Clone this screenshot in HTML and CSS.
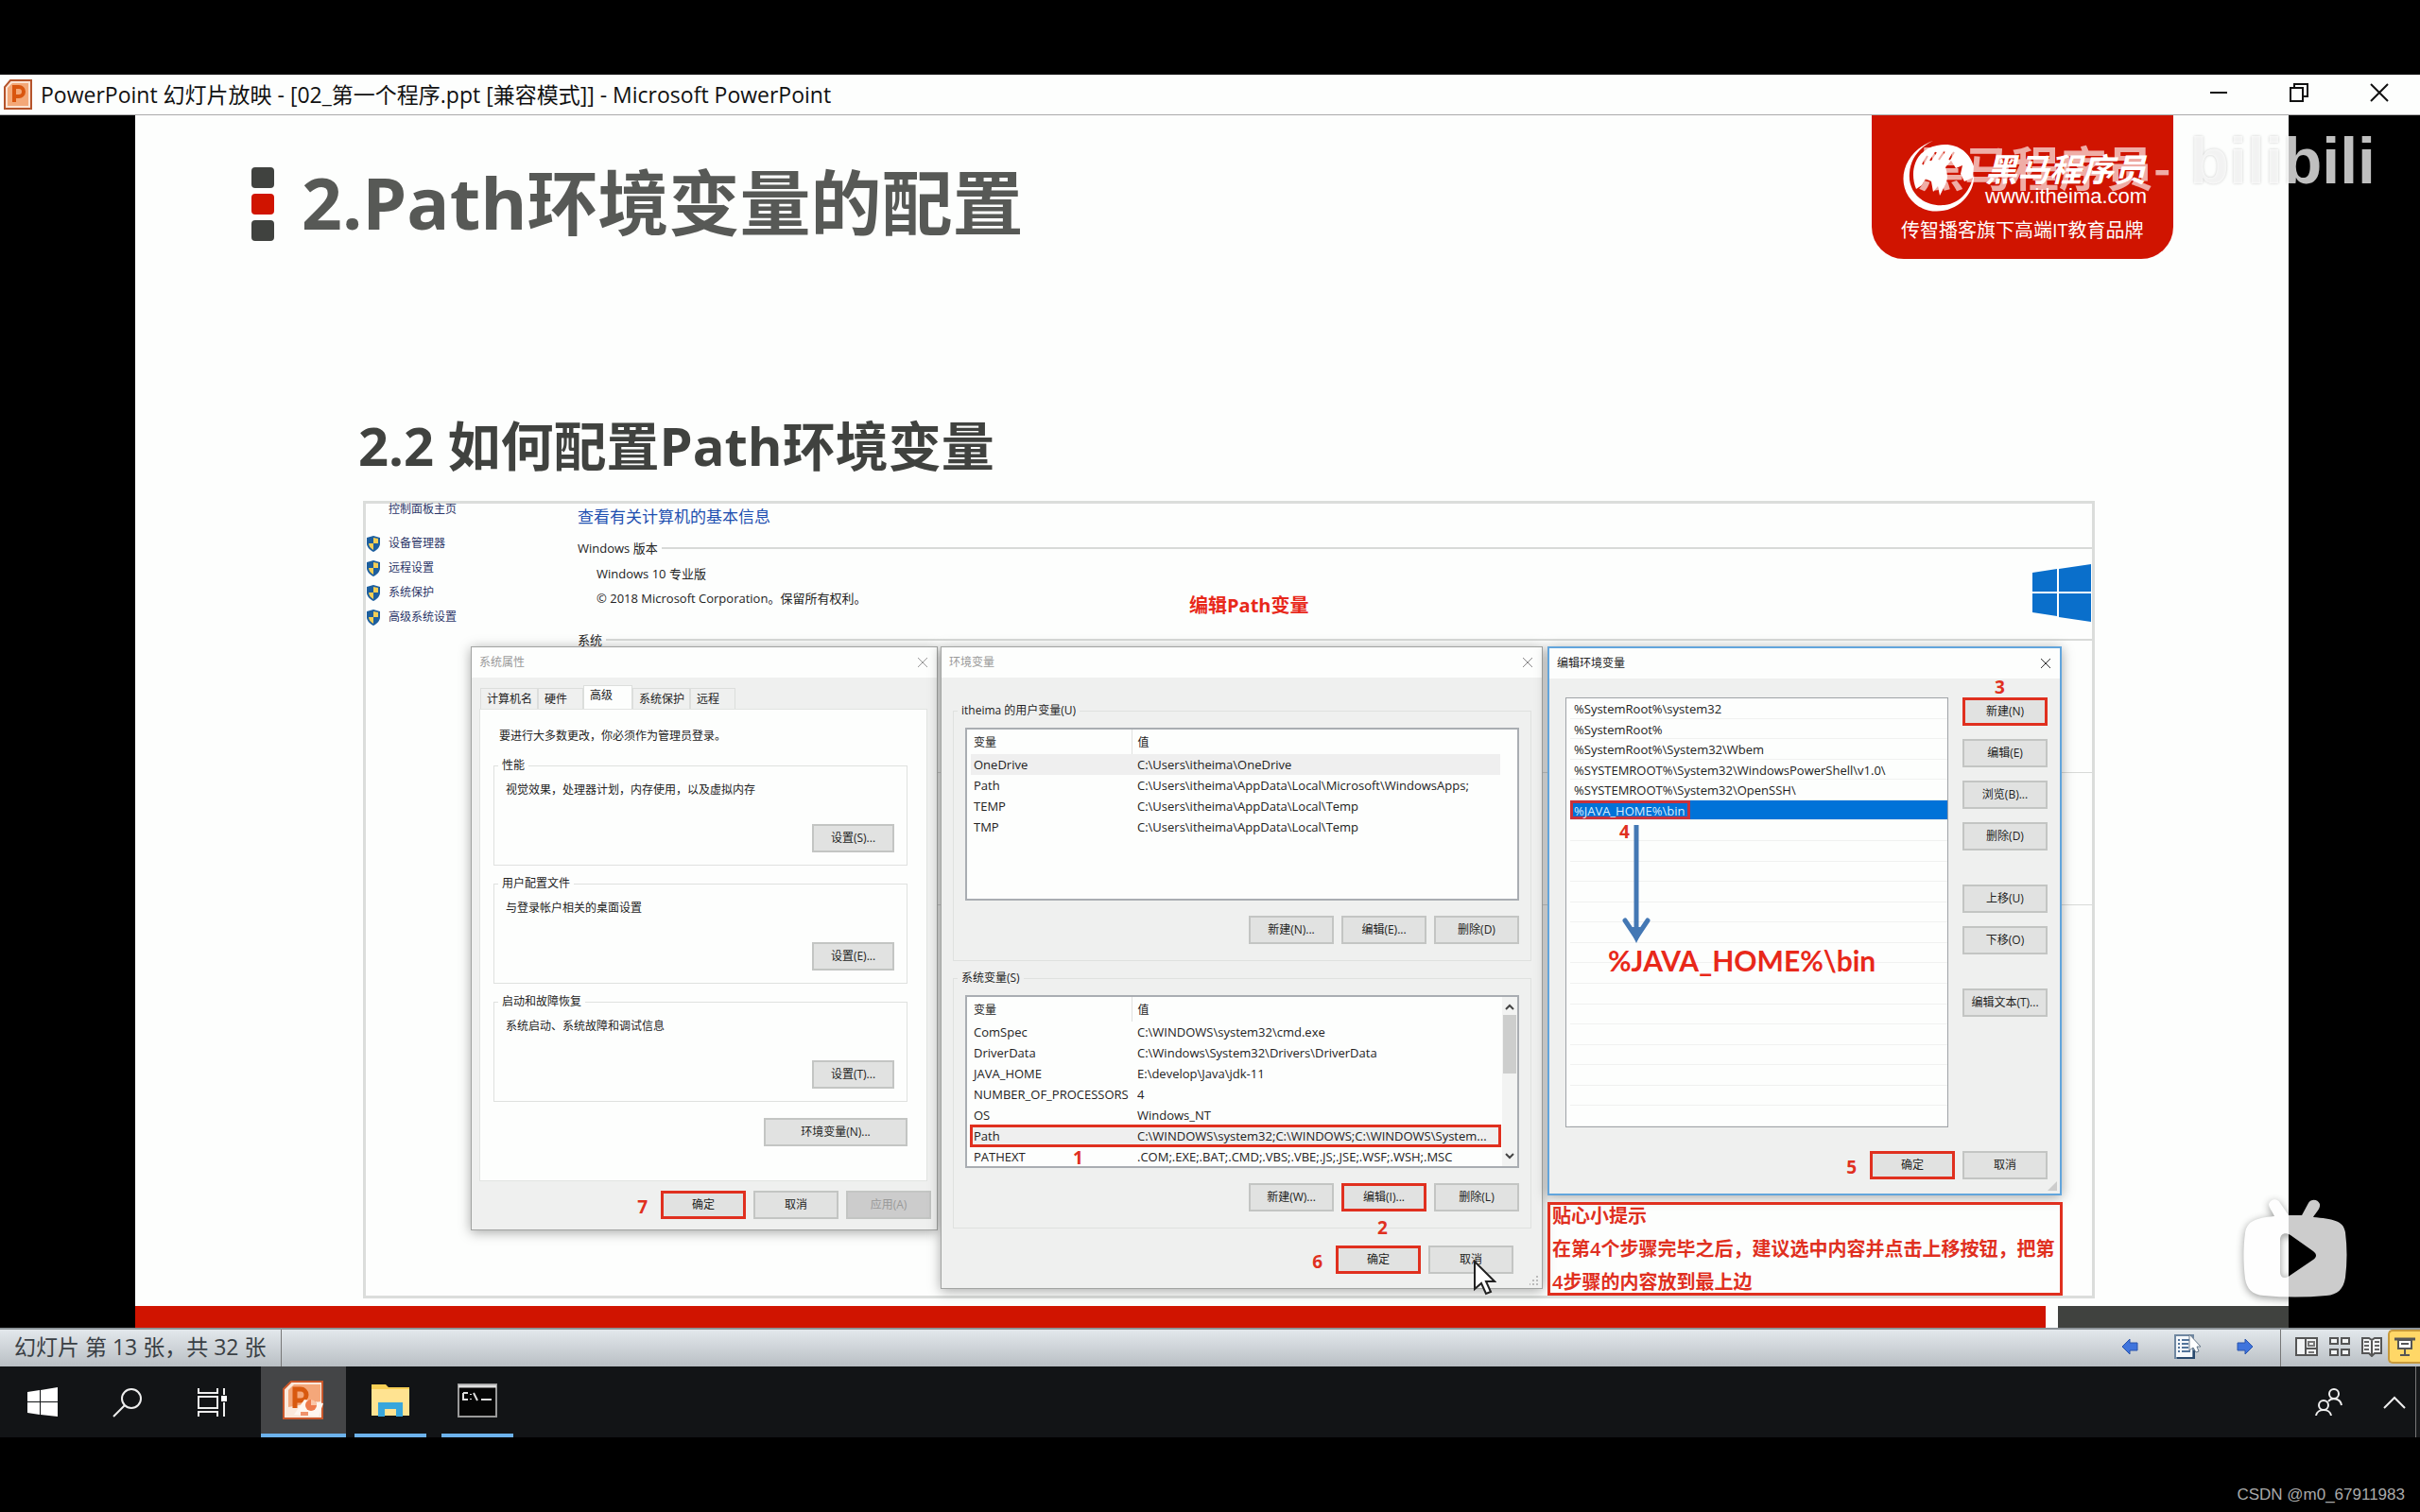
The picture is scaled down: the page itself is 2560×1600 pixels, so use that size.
FILE: index.html
```html
<!DOCTYPE html>
<html lang="zh-CN">
<head>
<meta charset="utf-8">
<title>PowerPoint 幻灯片放映</title>
<link rel="stylesheet" href="styles.css">
</head>
<body>
<div class="screen">
  <header class="titlebar">
    <svg class="app-icon" width="30" height="32" viewBox="0 0 30 32"><path d="M7 1h22v30H1V8z" fill="#fbe3d3" stroke="#b5542b" stroke-width="2"/><path d="M4 9l5-5h17v24H4z" fill="#f3a878"/><path d="M11 24V8h5a5 5 0 0 1 0 10h-5" fill="none" stroke="#d9560f" stroke-width="4"/></svg>
    <h1 class="window-title">PowerPoint 幻灯片放映 - [02_第一个程序.ppt [兼容模式]] - Microsoft PowerPoint</h1>
    <div class="window-controls">
      <button aria-label="最小化"><svg width="20" height="20" viewBox="0 0 20 20"><path d="M1 10h18" stroke="#111" stroke-width="2"/></svg></button>
      <button aria-label="还原"><svg width="20" height="20" viewBox="0 0 20 20"><path d="M1 5h13v14H1zM5 5V1h14v13h-5" fill="none" stroke="#111" stroke-width="2"/></svg></button>
      <button aria-label="关闭"><svg width="20" height="20" viewBox="0 0 20 20"><path d="M1 1l18 18M19 1L1 19" stroke="#111" stroke-width="2"/></svg></button>
    </div>
  </header>

  <main class="stage">
    <article class="slide">
      <div class="slide-head">
        <div class="bullets"><i></i><i class="red"></i><i></i></div>
        <h2 class="slide-title">2.Path环境变量的配置</h2>
        <div class="brand">
          <div class="brand-row">
            <svg width="82" height="76" viewBox="0 0 82 76"><path d="M34 1C8 10-6 38 8 60c13 20 42 20 58 4 8-8 12-18 11-28-3 16-13 31-31 33C22 71 7 54 9 35 10 20 19 8 34 1z" fill="#fff"/><path d="M16 52C8 32 16 10 38 6c20-4 34 6 39 22l-1 12-9 4-4-8 2-9-7 3-5-8-6 7c2 6 3 12 0 18l-6 12-2-10-5 6-2-11-6-3-4 7z" fill="#fff"/><path d="M28 17l-5 9M37 13l-6 9M46 12l-6 9M56 13l-5 8" stroke="#d01400" stroke-width="2"/></svg>
            <div class="brand-text">
              <strong>黑马程序员</strong>
              <a href="#">www.itheima.com</a>
            </div>
          </div>
          <p class="brand-tag">传智播客旗下高端IT教育品牌</p>
        </div>
      </div>
      <h3 class="slide-sub">2.2 如何配置Path环境变量</h3>

      <section class="figure">
        <div class="sysinfo">
          <nav class="side">
            <a href="#">控制面板主页</a>
            <ul>
              <li><svg width="16" height="17" viewBox="0 0 16 17"><path d="M8 0l7 2v6c0 4-3 7-7 9-4-2-7-5-7-9V2z" fill="#1d5f9e"/><path d="M8 2l5 1v5H8zM8 8v7C5 13 3 11 3 8z" fill="#f4cf55"/></svg><a href="#">设备管理器</a></li>
              <li><svg width="16" height="17" viewBox="0 0 16 17"><path d="M8 0l7 2v6c0 4-3 7-7 9-4-2-7-5-7-9V2z" fill="#1d5f9e"/><path d="M8 2l5 1v5H8zM8 8v7C5 13 3 11 3 8z" fill="#f4cf55"/></svg><a href="#">远程设置</a></li>
              <li><svg width="16" height="17" viewBox="0 0 16 17"><path d="M8 0l7 2v6c0 4-3 7-7 9-4-2-7-5-7-9V2z" fill="#1d5f9e"/><path d="M8 2l5 1v5H8zM8 8v7C5 13 3 11 3 8z" fill="#f4cf55"/></svg><a href="#">系统保护</a></li>
              <li><svg width="16" height="17" viewBox="0 0 16 17"><path d="M8 0l7 2v6c0 4-3 7-7 9-4-2-7-5-7-9V2z" fill="#1d5f9e"/><path d="M8 2l5 1v5H8zM8 8v7C5 13 3 11 3 8z" fill="#f4cf55"/></svg><a href="#">高级系统设置</a></li>
            </ul>
          </nav>
          <div class="info">
            <h4>查看有关计算机的基本信息</h4>
            <div class="info-head"><span>Windows 版本</span><hr></div>
            <div class="info-body">
              <div class="info-lines"><p>Windows 10 专业版</p><p>© 2018 Microsoft Corporation。保留所有权利。</p></div>
              <svg width="62" height="61" viewBox="0 0 62 61"><path d="M0 9l26-4v24H0zM28 5l34-5v29H28zM0 31h26v24L0 51zM28 31h34v30l-34-5z" fill="#0a6fcb"/></svg>
            </div>
            <div class="info-head"><span>系统</span><hr></div>
            <hr class="rule"><hr class="rule">
          </div>
        </div>
        <strong class="note caption">编辑Path变量</strong>

        <section class="dialog props">
          <header><h5>系统属性</h5><button class="close" aria-label="关闭"><svg width="12" height="12" viewBox="0 0 12 12"><path d="M1 1l10 10M11 1L1 11" stroke="#999"/></svg></button></header>
          <div class="tabs"><button>计算机名</button><button>硬件</button><button class="active">高级</button><button>系统保护</button><button>远程</button></div>
          <div class="tabpage">
            <p>要进行大多数更改，你必须作为管理员登录。</p>
            <fieldset><legend>性能</legend><p>视觉效果，处理器计划，内存使用，以及虚拟内存</p><button class="btn">设置(S)...</button></fieldset>
            <fieldset><legend>用户配置文件</legend><p>与登录帐户相关的桌面设置</p><button class="btn">设置(E)...</button></fieldset>
            <fieldset><legend>启动和故障恢复</legend><p>系统启动、系统故障和调试信息</p><button class="btn">设置(T)...</button></fieldset>
            <button class="btn wide">环境变量(N)...</button>
          </div>
          <div class="actions"><b class="num">7</b><button class="btn marked">确定</button><button class="btn">取消</button><button class="btn" disabled>应用(A)</button></div>
        </section>

        <section class="dialog env">
          <header><h5>环境变量</h5><button class="close" aria-label="关闭"><svg width="12" height="12" viewBox="0 0 12 12"><path d="M1 1l10 10M11 1L1 11" stroke="#888"/></svg></button></header>
          <fieldset>
            <legend>itheima 的用户变量(U)</legend>
            <div class="tablebox">
              <table>
                <thead><tr><th>变量</th><th>值</th></tr></thead>
                <tbody>
                  <tr class="hover"><td>OneDrive</td><td>C:\Users\itheima\OneDrive</td></tr>
                  <tr><td>Path</td><td>C:\Users\itheima\AppData\Local\Microsoft\WindowsApps;</td></tr>
                  <tr><td>TEMP</td><td>C:\Users\itheima\AppData\Local\Temp</td></tr>
                  <tr><td>TMP</td><td>C:\Users\itheima\AppData\Local\Temp</td></tr>
                </tbody>
              </table>
            </div>
            <div class="row"><button class="btn">新建(N)...</button><button class="btn">编辑(E)...</button><button class="btn">删除(D)</button></div>
          </fieldset>
          <fieldset>
            <legend>系统变量(S)</legend>
            <div class="tablebox">
              <table>
                <thead><tr><th>变量</th><th>值</th></tr></thead>
                <tbody>
                  <tr><td>ComSpec</td><td>C:\WINDOWS\system32\cmd.exe</td></tr>
                  <tr><td>DriverData</td><td>C:\Windows\System32\Drivers\DriverData</td></tr>
                  <tr><td>JAVA_HOME</td><td>E:\develop\Java\jdk-11</td></tr>
                  <tr><td>NUMBER_OF_PROCESSORS</td><td>4</td></tr>
                  <tr><td>OS</td><td>Windows_NT</td></tr>
                  <tr class="hover boxed"><td>Path</td><td>C:\WINDOWS\system32;C:\WINDOWS;C:\WINDOWS\System...</td></tr>
                  <tr><td>PATHEXT</td><td>.COM;.EXE;.BAT;.CMD;.VBS;.VBE;.JS;.JSE;.WSF;.WSH;.MSC</td></tr>
                </tbody>
              </table>
              <div class="scroll">
                <svg width="10" height="8" viewBox="0 0 10 8"><path d="M1 6l4-4 4 4" fill="none" stroke="#444" stroke-width="2"/></svg>
                <i></i>
                <svg width="10" height="8" viewBox="0 0 10 8"><path d="M1 2l4 4 4-4" fill="none" stroke="#444" stroke-width="2"/></svg>
              </div>
              <b class="num one">1</b>
            </div>
            <div class="row"><button class="btn">新建(W)...</button><button class="btn marked">编辑(I)...</button><button class="btn">删除(L)</button></div>
            <b class="num two">2</b>
          </fieldset>
          <div class="actions"><b class="num">6</b><button class="btn marked">确定</button><button class="btn">取消</button></div>
          <svg class="grip" width="10" height="10" viewBox="0 0 10 10"><path d="M8 0v2M8 4v2M8 8v2M4 4v2M4 8v2M0 8v2" stroke="#bbb" stroke-width="2"/></svg>
        </section>

        <section class="dialog edit">
          <header><h5>编辑环境变量</h5><button class="close" aria-label="关闭"><svg width="12" height="12" viewBox="0 0 12 12"><path d="M1 1l10 10M11 1L1 11" stroke="#333"/></svg></button></header>
          <div class="edit-body">
            <ul class="pathlist">
              <li>%SystemRoot%\system32</li><li>%SystemRoot%</li><li>%SystemRoot%\System32\Wbem</li><li>%SYSTEMROOT%\System32\WindowsPowerShell\v1.0\</li><li>%SYSTEMROOT%\System32\OpenSSH\</li><li class="selected"><span>%JAVA_HOME%\bin</span></li><li></li><li></li><li></li><li></li><li></li><li></li><li></li><li></li><li></li><li></li><li></li><li></li><li></li><li></li><li></li>
            </ul>
            <div class="stack">
              <b class="num three">3</b>
              <button class="btn marked">新建(N)</button><button class="btn">编辑(E)</button><button class="btn">浏览(B)...</button><button class="btn">删除(D)</button>
              <button class="btn apart">上移(U)</button><button class="btn">下移(O)</button>
              <button class="btn apart">编辑文本(T)...</button>
            </div>
          </div>
          <div class="actions"><b class="num">5</b><button class="btn marked">确定</button><button class="btn">取消</button></div>
          <b class="num four">4</b>
          <svg class="arrow" width="30" height="126" viewBox="0 0 30 126"><path d="M15 0v114" stroke="#4478b4" stroke-width="5"/><path d="M3 101l12 18 12-18" fill="none" stroke="#4478b4" stroke-width="5" stroke-linecap="round"/><path d="M7 108h16l-8 17z" fill="#4478b4"/></svg>
          <strong class="note java">%JAVA_HOME%\bin</strong>
          <svg class="grip" width="10" height="10" viewBox="0 0 10 10"><path d="M10 0v10H0z" fill="#ccc"/></svg>
        </section>

        <aside class="tip"><strong>贴心小提示</strong><span>在第4个步骤完毕之后，建议选中内容并点击上移按钮，把第</span><span>4步骤的内容放到最上边</span></aside>
        <svg class="cursor" width="24" height="38" viewBox="0 0 24 38"><path d="M1 2v29l7-6 5 11 5-2-5-11h9z" fill="#fff" stroke="#222" stroke-width="2"/></svg>
      </section>
      <footer class="slide-foot"><i></i><i></i></footer>
    </article>
  </main>

  <footer class="statusbar">
    <span class="status-text">幻灯片 第 13 张，共 32 张</span>
    <div class="status-nav">
      <button aria-label="上一张"><svg width="18" height="18" viewBox="0 0 18 18"><path d="M1 9l8-8v4h8v8H9v4z" fill="#3f74dd" stroke="#2a55ad"/></svg></button>
      <button aria-label="菜单"><svg width="30" height="28" viewBox="0 0 30 28"><path d="M2 2h19v24H2z" fill="#f5f8fb" stroke="#6f87a0" stroke-width="2"/><path d="M4 26h18v-8" fill="none" stroke="#28496d" stroke-width="2"/><path d="M5 7h2M5 11h2M5 15h2M5 19h2M9 7h8M9 11h7M9 15h7M9 19h9" stroke="#52749a" stroke-width="2"/><path d="M17 1v17l4-3 3 5 3-1-2-5h4z" fill="#fff" stroke="#66788a"/></svg></button>
      <button aria-label="下一张"><svg width="18" height="18" viewBox="0 0 18 18"><path d="M17 9L9 1v4H1v8h8v4z" fill="#3f74dd" stroke="#2a55ad"/></svg></button>
    </div>
    <div class="status-views">
      <button aria-label="普通视图"><svg width="24" height="20" viewBox="0 0 24 20"><path d="M1 1h22v18H1zM11 1v18M11 12h12" fill="#f2f4f5" stroke="#555" stroke-width="2"/><path d="M14 5h6v4h-6zM14 16h6" fill="none" stroke="#777" stroke-width="2"/></svg></button>
      <button aria-label="幻灯片浏览"><svg width="22" height="20" viewBox="0 0 22 20"><path d="M1 1h8v6H1zM13 1h8v6h-8zM1 13h8v6H1zM13 13h8v6h-8z" fill="#f2f4f5" stroke="#555" stroke-width="2"/></svg></button>
      <button aria-label="阅读视图"><svg width="22" height="22" viewBox="0 0 22 22"><path d="M1 2h7l3 2 3-2h7v16h-7l-3 3-3-3H1zM11 4v16" fill="#f2f4f5" stroke="#555" stroke-width="2"/><path d="M3 6h5M3 10h5M3 14h5M14 6h5M14 10h5M14 14h5" stroke="#666" stroke-width="2"/></svg></button>
      <button class="on" aria-label="幻灯片放映"><svg width="22" height="20" viewBox="0 0 22 20"><path d="M0 2h22" stroke="#555" stroke-width="3"/><path d="M4 3h14v9H4z" fill="#fff" stroke="#555" stroke-width="2"/><path d="M7 7h8M11 12v6M6 19h10" stroke="#555" stroke-width="2"/></svg></button>
    </div>
  </footer>

  <nav class="taskbar">
    <button aria-label="开始"><svg width="32" height="32" viewBox="0 0 32 32"><path d="M0 5l13-2v12H0zM14 3l18-3v15H14zM0 16h13v13L0 27zM14 16h18v15l-18-2z" fill="#fff"/></svg></button>
    <button aria-label="搜索"><svg width="32" height="32" viewBox="0 0 32 32"><circle cx="20" cy="12" r="10" fill="none" stroke="#eee" stroke-width="2"/><path d="M13 19L1 31" stroke="#eee" stroke-width="2"/></svg></button>
    <button aria-label="任务视图"><svg width="32" height="30" viewBox="0 0 32 30"><path d="M1 0v5h20V0M1 30v-5h20v5M1 9h20v12H1zM28 0v7M28 15v15" fill="none" stroke="#eee" stroke-width="2"/><path d="M25 8h6v6h-6z" fill="#fff"/></svg></button>
    <button class="task current" aria-label="PowerPoint"><svg width="44" height="42" viewBox="0 0 44 42"><path d="M9 1h33v39H1V9z" fill="#fbe9dc" stroke="#c9572b" stroke-width="2"/><path d="M6 10l6-6h28v18L6 28z" fill="#f4a77a"/><path d="M13 29V9h6a6 6 0 0 1 0 12h-6" fill="none" stroke="#d8590f" stroke-width="5"/><path d="M23 20l20 4-5 14-26-2z" fill="#fff6ef"/><circle cx="30" cy="26" r="6" fill="#ee7b4b"/><path d="M30 26v-6a6 6 0 0 1 6 6z" fill="#fac7a8"/><path d="M19 33h8v4h-8z" fill="#f0926b"/></svg></button>
    <button class="task" aria-label="文件资源管理器"><svg width="42" height="36" viewBox="0 0 42 36"><path d="M1 1h15l3 3h22v30H1z" fill="#f7cf55"/><path d="M1 6h40v28H1z" fill="#ffe391"/><path d="M8 35V20h26v15h-7v-8H15v8z" fill="#38a6dc"/></svg></button>
    <button class="task" aria-label="命令提示符"><svg width="42" height="36" viewBox="0 0 42 36"><path d="M1 1h40v34H1z" fill="#050505" stroke="#999" stroke-width="2"/><path d="M1 3h40" stroke="#ddd" stroke-width="3"/><path d="M6 10h5M6 10v7h5M14 11v1M14 16v1M17 10l4 8M25 17h11" fill="none" stroke="#ddd" stroke-width="2"/></svg></button>
    <div class="tray">
      <button aria-label="人脉"><svg width="30" height="30" viewBox="0 0 30 30"><g fill="none" stroke="#eee" stroke-width="2"><circle cx="20" cy="6" r="5"/><circle cx="9" cy="18" r="5"/><path d="M1 29c1-8 15-8 16 0M14 14c4-5 13-3 14 4"/></g></svg></button>
      <button aria-label="显示隐藏的图标"><svg width="24" height="14" viewBox="0 0 24 14"><path d="M1 13L12 2l11 11" fill="none" stroke="#eee" stroke-width="2"/></svg></button>
    </div>
  </nav>
  <p class="credit">CSDN @m0_67911983</p>

  <div class="watermark"><span>黑马程序员-</span><b>bilibili</b></div>
  <svg class="player" width="110" height="106" viewBox="0 0 110 106"><path fill-rule="evenodd" d="M27 5c3-6 9-6 12-1l9 13h14l7-13c3-5 10-4 12 1 1 5-4 9-7 14 20 2 32 3 34 16 2 16 2 32 0 48-2 12-8 18-20 19-22 2-44 2-66 0C9 101 4 95 2 84c-2-16-2-34 0-48C4 23 13 20 33 18c-2-5-6-9-6-13zM39 43v34c0 6 5 8 10 4l25-17c4-3 4-6 0-9L50 38c-6-4-11-1-11 5z" fill="#fff"/></svg>
</div>
</body>
</html>
```
FILE: styles.css
```css
* { box-sizing: border-box; }
body { margin: 0; background: #000; font-family: "Open Sans", "Noto Sans CJK SC", sans-serif; color: #222; }
h1, h2, h3, h4, h5, p, ul { margin: 0; padding: 0; font-weight: normal; }
ul { list-style: none; }
a { color: inherit; text-decoration: none; }
svg { display: block; flex: none; }
button { font: inherit; color: inherit; border: 0; padding: 0; margin: 0; background: none; }
hr { border: 0; height: 1px; margin: 0; background: #d8dad8; }

.screen { position: relative; min-height: 100vh; padding-top: 79px; overflow: hidden; display: flex; flex-direction: column; }

/* window title bar */
.titlebar { height: 43px; flex: none; display: flex; align-items: center; padding: 0 33px 0 4px; background: #fdfefd; border-bottom: 1px solid #aaa; }
.window-title { margin-left: 9px; font-size: 23px; line-height: 30px; color: #111; white-space: nowrap; }
.window-controls { margin-left: auto; display: flex; gap: 65px; padding-bottom: 5px; }

/* slide */
.stage { background: #000; padding: 0 139px 0 143px; }
.slide { background: #fdfefd; display: flex; flex-direction: column; }
.slide-head { display: flex; align-items: flex-start; padding: 0 122px 0 123px; }
.bullets { display: flex; flex-direction: column; gap: 6px; padding-top: 55px; }
.bullets i { width: 24px; height: 22px; border-radius: 4px; background: #40423f; }
.bullets .red { background: #d01400; }
.slide-title { margin: 53px auto 0 29px; font-size: 75px; line-height: 78px; font-weight: 700; color: #575956; white-space: nowrap; }
.brand { width: 319px; height: 152px; border-radius: 0 0 34px 34px; background: #d01400; color: #fff; padding: 26px 20px 0 31px; }
.brand-row { display: flex; gap: 7px; }
.brand-text { display: flex; flex-direction: column; padding-top: 12px; }
.brand-text strong { font: italic 700 34px/36px "Noto Sans CJK SC", sans-serif; white-space: nowrap; }
.brand-text a { font: 22px/24px "Liberation Sans", sans-serif; }
.brand-tag { margin-top: 6px; font-size: 20px; line-height: 28px; white-space: nowrap; }
.slide-sub { margin: 165px 0 0 236px; font-size: 56px; line-height: 64px; font-weight: 700; color: #40423f; }
.slide-foot { display: flex; gap: 13px; height: 23px; margin-top: 10px; }
.slide-foot i { flex: 1; background: #d01400; }
.slide-foot i + i { flex: none; width: 244px; background: #40423f; }

/* embedded screenshot: a canvas of dialog windows */
.figure { position: relative; height: 844px; margin: 27px 205px 0 241px; border: 3px solid #dbdddb; font-size: 12px; line-height: 16px; }
.slide .figure { margin-bottom: -2px; }
.sysinfo { display: grid; grid-template-columns: 224px 1fr; }
.side { padding-left: 24px; line-height: 12px; color: #2b3568; }
.side ul { margin: 17px 0 0 -24px; }
.side li { display: flex; align-items: center; gap: 8px; height: 26px; }
.info { padding-top: 4px; font-size: 13px; line-height: 20px; }
.info h4 { font-size: 17px; line-height: 20px; color: #1d4fb0; }
.info-head { display: flex; align-items: center; gap: 4px; margin-top: 13px; }
.info-head hr { flex: 1; height: 2px; }
.info-body { display: flex; justify-content: space-between; padding: 7px 1px 0 20px; }
.info-body + .info-head { margin-top: 9px; }
.info-lines { display: grid; gap: 6px; align-content: start; }
.rule { margin-top: 130px; }
.rule + .rule { margin-top: 139px; }

.note { position: absolute; color: #e8281a; font-weight: 700; white-space: nowrap; }
.caption { left: 871px; top: 94px; font-size: 20px; line-height: 28px; }
.num { font-size: 19px; line-height: 20px; font-weight: 700; color: #e0301f; }

.dialog { position: absolute; top: 151px; background: #eff0ef; border: 1px solid #a2a4a2; box-shadow: 0 2px 12px rgba(0,0,0,.35); }
.dialog > header { display: flex; justify-content: space-between; align-items: center; height: 32px; padding: 0 9px 0 8px; background: #fdfefd; }
.dialog h5 { font-size: 12px; color: #999; }
.props { left: 111px; width: 494px; height: 618px; }
.env { left: 608px; width: 637px; height: 680px; }
.edit { left: 1250px; width: 544px; height: 581px; border: 2px solid #62a5dc; }
.edit h5 { color: #222; }

.btn { width: 90px; height: 30px; flex: none; background: #e1e2e1; border: 2px solid #c3c5c3; line-height: 16px; white-space: nowrap; }
.btn.marked { border: 3px solid #e0301f; }
.btn:disabled { background: #ccc; color: #999; }
.wide { width: 152px; }
.actions { display: flex; justify-content: flex-end; align-items: center; gap: 8px; }
.actions .num { margin: 4px 6px 0 0; }

fieldset { position: relative; min-width: 0; margin: 0; padding: 0 12px; border: 1px solid #dfe1df; }
legend { margin-left: -8px; padding: 0 4px; line-height: 16px; }

.tabs { display: flex; align-items: flex-end; height: 33px; margin-left: 9px; }
.tabs button { width: 61px; height: 22px; padding: 0 0 0 6px; border: 1px solid #dcdedc; border-bottom: 0; text-align: left; white-space: nowrap; }
.tabs button:nth-child(2), .tabs button:last-child { width: 48px; }
.tabs .active { width: 52px; height: 25px; background: #fdfefd; padding-bottom: 4px; }
.tabpage { display: flex; flex-direction: column; height: 500px; margin: 0 10px 0 8px; padding: 20px 20px 0 14px; background: #fdfefd; border: 1px solid #e2e4e2; }
.tabpage > p { padding-left: 6px; margin-bottom: 4px; }
.tabpage fieldset { height: 114px; margin-top: 11px; }
.tabpage fieldset p { margin-top: 10px; }
.tabpage fieldset .btn { display: block; width: 87px; margin: 28px 1px 0 auto; }
.tabpage .wide { align-self: flex-end; margin-top: 17px; }
.props .actions { margin-top: 10px; padding-right: 6px; }

.env fieldset { height: 273px; margin: 10px 11px 0 12px; }
.env header + fieldset { margin-top: 27px; }
.tablebox { position: relative; display: flex; justify-content: space-between; height: 183px; margin-top: 10px; background: #fdfefd; border: 2px solid #a9adb2; }
table { width: 560px; margin-left: 4px; border-collapse: collapse; table-layout: fixed; align-self: flex-start; }
th { height: 26px; padding: 2px 3px 0; text-align: left; font-size: 12px; font-weight: normal; }
th:first-child { width: 170px; border-right: 1px solid #dfe1df; }
td { height: 22px; padding: 0 3px; font-size: 13px; white-space: nowrap; }
th + th, td + td { padding-left: 6px; }
.hover { background: #efefef; }
.boxed { outline: 3px solid #e0301f; outline-offset: -2px; }
.scroll { display: flex; flex-direction: column; align-items: center; width: 16px; padding: 7px 0; background: #f2f3f2; }
.scroll i { width: 14px; height: 62px; margin: 4px 0 auto; background: #cdcecd; }
.one { position: absolute; left: 112px; top: 160px; }
.two { position: absolute; left: 448px; bottom: -10px; }
.row { display: flex; justify-content: flex-end; gap: 8px; margin-top: 16px; }
.env .actions { margin-top: 18px; padding-right: 30px; }
.grip { position: absolute; right: 3px; bottom: 3px; }

.edit-body { display: flex; justify-content: space-between; padding: 20px 13px 0 17px; }
.pathlist { width: 405px; height: 455px; display: grid; grid-template-rows: repeat(21, 1fr); background: #fdfefd; border: 1px solid #9fa3a7; font-size: 13px; line-height: 22px; }
.pathlist li { min-height: 0; margin-left: 4px; padding-left: 4px; border-bottom: 1px solid #f0f1f0; white-space: nowrap; }
.pathlist .selected { display: flex; padding: 0; background: #0072d8; color: #dcecfa; }
.selected span { padding: 0 3px 0 1px; border: 3px solid #c8323c; line-height: 16px; }
.stack { position: relative; display: flex; flex-direction: column; gap: 14px; }
.apart { margin-top: 22px; }
.three { position: absolute; left: 34px; top: -21px; }
.edit .actions { margin-top: 25px; padding-right: 13px; }
.four { position: absolute; left: 74px; top: 184px; }
.arrow { position: absolute; left: 77px; top: 187px; }
.java { left: 62px; top: 310px; font: 700 30px/40px Lato, sans-serif; }

.tip { position: absolute; left: 1250px; top: 739px; width: 545px; display: flex; flex-direction: column; gap: 13px; padding: 1px 0 0 2px; border: 3px solid #e0301f; color: #e0301f; font-size: 20px; line-height: 22px; font-weight: 600; white-space: nowrap; }
.tip strong { font-weight: 600; }
.cursor { position: absolute; left: 1172px; top: 800px; }

/* PowerPoint status bar */
.statusbar { display: flex; align-items: stretch; height: 41px; flex: none; background: linear-gradient(#e3e8ec, #b9bfc4); border-top: 2px solid #8d9499; color: #3a4045; }
.status-text { padding: 0 16px 0 15px; border-right: 1px solid #777; font-size: 23px; line-height: 36px; }
.status-nav { display: flex; align-items: center; gap: 37px; margin-left: auto; padding: 0 28px 3px 0; border-right: 1px solid #777; }
.status-views { display: flex; align-items: center; gap: 12px; padding: 0 0 3px 15px; }
.status-views .on { height: 36px; width: 34px; margin-left: -6px; padding-left: 5px; background: #ffd767; border: 2px solid #c79a3c; border-right: 0; border-radius: 5px 0 0 5px; }

/* Windows taskbar */
.taskbar { display: flex; height: 75px; flex: none; background: #121416; }
.taskbar button { display: grid; place-items: center; width: 90px; }
.taskbar > button:nth-child(3) { margin-right: 6px; }
.taskbar .task { width: 76px; margin-left: 9px; border-bottom: 4px solid #6cb2ec; margin-right: 7px; }
.taskbar .current { width: 90px; margin: 0; background: #444547; }
.tray { display: flex; gap: 42px; margin-left: auto; padding-right: 11px; border-right: 4px solid #17191b; box-shadow: inset -1px 0 #777; }
.taskbar .tray button { width: auto; }
.credit { margin-left: auto; padding: 50px 16px 0 0; font: 17px/22px "Liberation Sans", sans-serif; color: #aaa; }

/* video overlay */
.watermark { position: absolute; right: 47px; top: 120px; display: flex; align-items: center; gap: 20px; color: rgba(255,255,255,.75); white-space: nowrap; }
.watermark span { font: 700 50px/110px "Noto Sans CJK SC", sans-serif; color: rgba(255,255,255,.65); }
.watermark b { padding-bottom: 10px; font: 700 68px/90px "Liberation Sans", sans-serif; text-shadow: 0 0 3px rgba(0,0,0,.2); }
.player { position: absolute; right: 77px; top: 1269px; opacity: .8; filter: drop-shadow(0 2px 4px rgba(0,0,0,.5)); }
```
